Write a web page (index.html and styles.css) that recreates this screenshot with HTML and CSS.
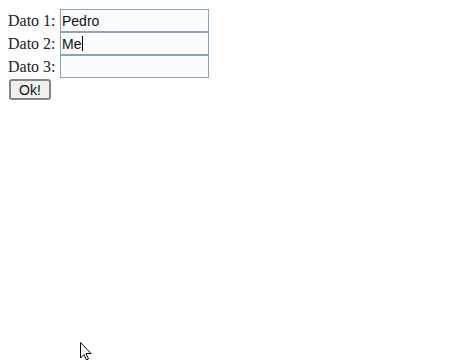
FILE: index.html
```html
<!DOCTYPE html>
<html>
<head>
<meta charset="utf-8">
<link rel="stylesheet" href="styles.css">
</head>
<body>
<form class="form">
  <div class="row"><label class="lbl">Dato 1:</label><div class="field">Pedro</div></div>
  <div class="row"><label class="lbl">Dato 2:</label><div class="field">Me<span class="caret"></span></div></div>
  <div class="row"><label class="lbl">Dato 3:</label><div class="field"></div></div>
  <div class="actions"><button type="button" class="btn">Ok!</button></div>
</form>
<svg class="cursor" width="12" height="19" viewBox="0 0 12 19">
  <path d="M0.5 0.5 L0.5 16 L4 12.5 L6.5 18 L8.5 17 L6 11.5 L11 11.5 Z" fill="#fff" stroke="#000" stroke-width="1"/>
</svg>
</body>
</html>
```
FILE: styles.css
```css
html, body { background: #fff; }
body {
  margin: 0;
  padding: 9px 0 0 8px;
  font-family: "Liberation Serif", "Times New Roman", serif;
  font-size: 16px;
  color: #222;
  position: relative;
  height: 351px;
  overflow: hidden;
}
.form { display: flex; flex-direction: column; }
.row { display: flex; align-items: center; height: 23px; }
.lbl { width: 52px; }
.field {
  box-sizing: border-box;
  width: 149px;
  height: 23px;
  border: 1px solid #8aa3b8;
  background: #fafcfd;
  font-family: "Liberation Sans", Arial, sans-serif;
  font-size: 14px;
  color: #111;
  padding: 3px 1px;
  display: flex;
  align-items: center;
}
.caret { display: inline-block; width: 1px; height: 15px; background: #000; margin-left: 1px; }
.actions { margin-top: 1px; }
.btn {
  box-sizing: border-box;
  width: 42px;
  height: 21px;
  margin-left: 1px;
  border: 2px solid #7d8790;
  border-radius: 3px;
  background: #f0f0ec;
  font-family: "Liberation Sans", Arial, sans-serif;
  font-size: 14px;
  color: #111;
  padding: 0;
}
.cursor { position: absolute; left: 80px; top: 342px; }
```
